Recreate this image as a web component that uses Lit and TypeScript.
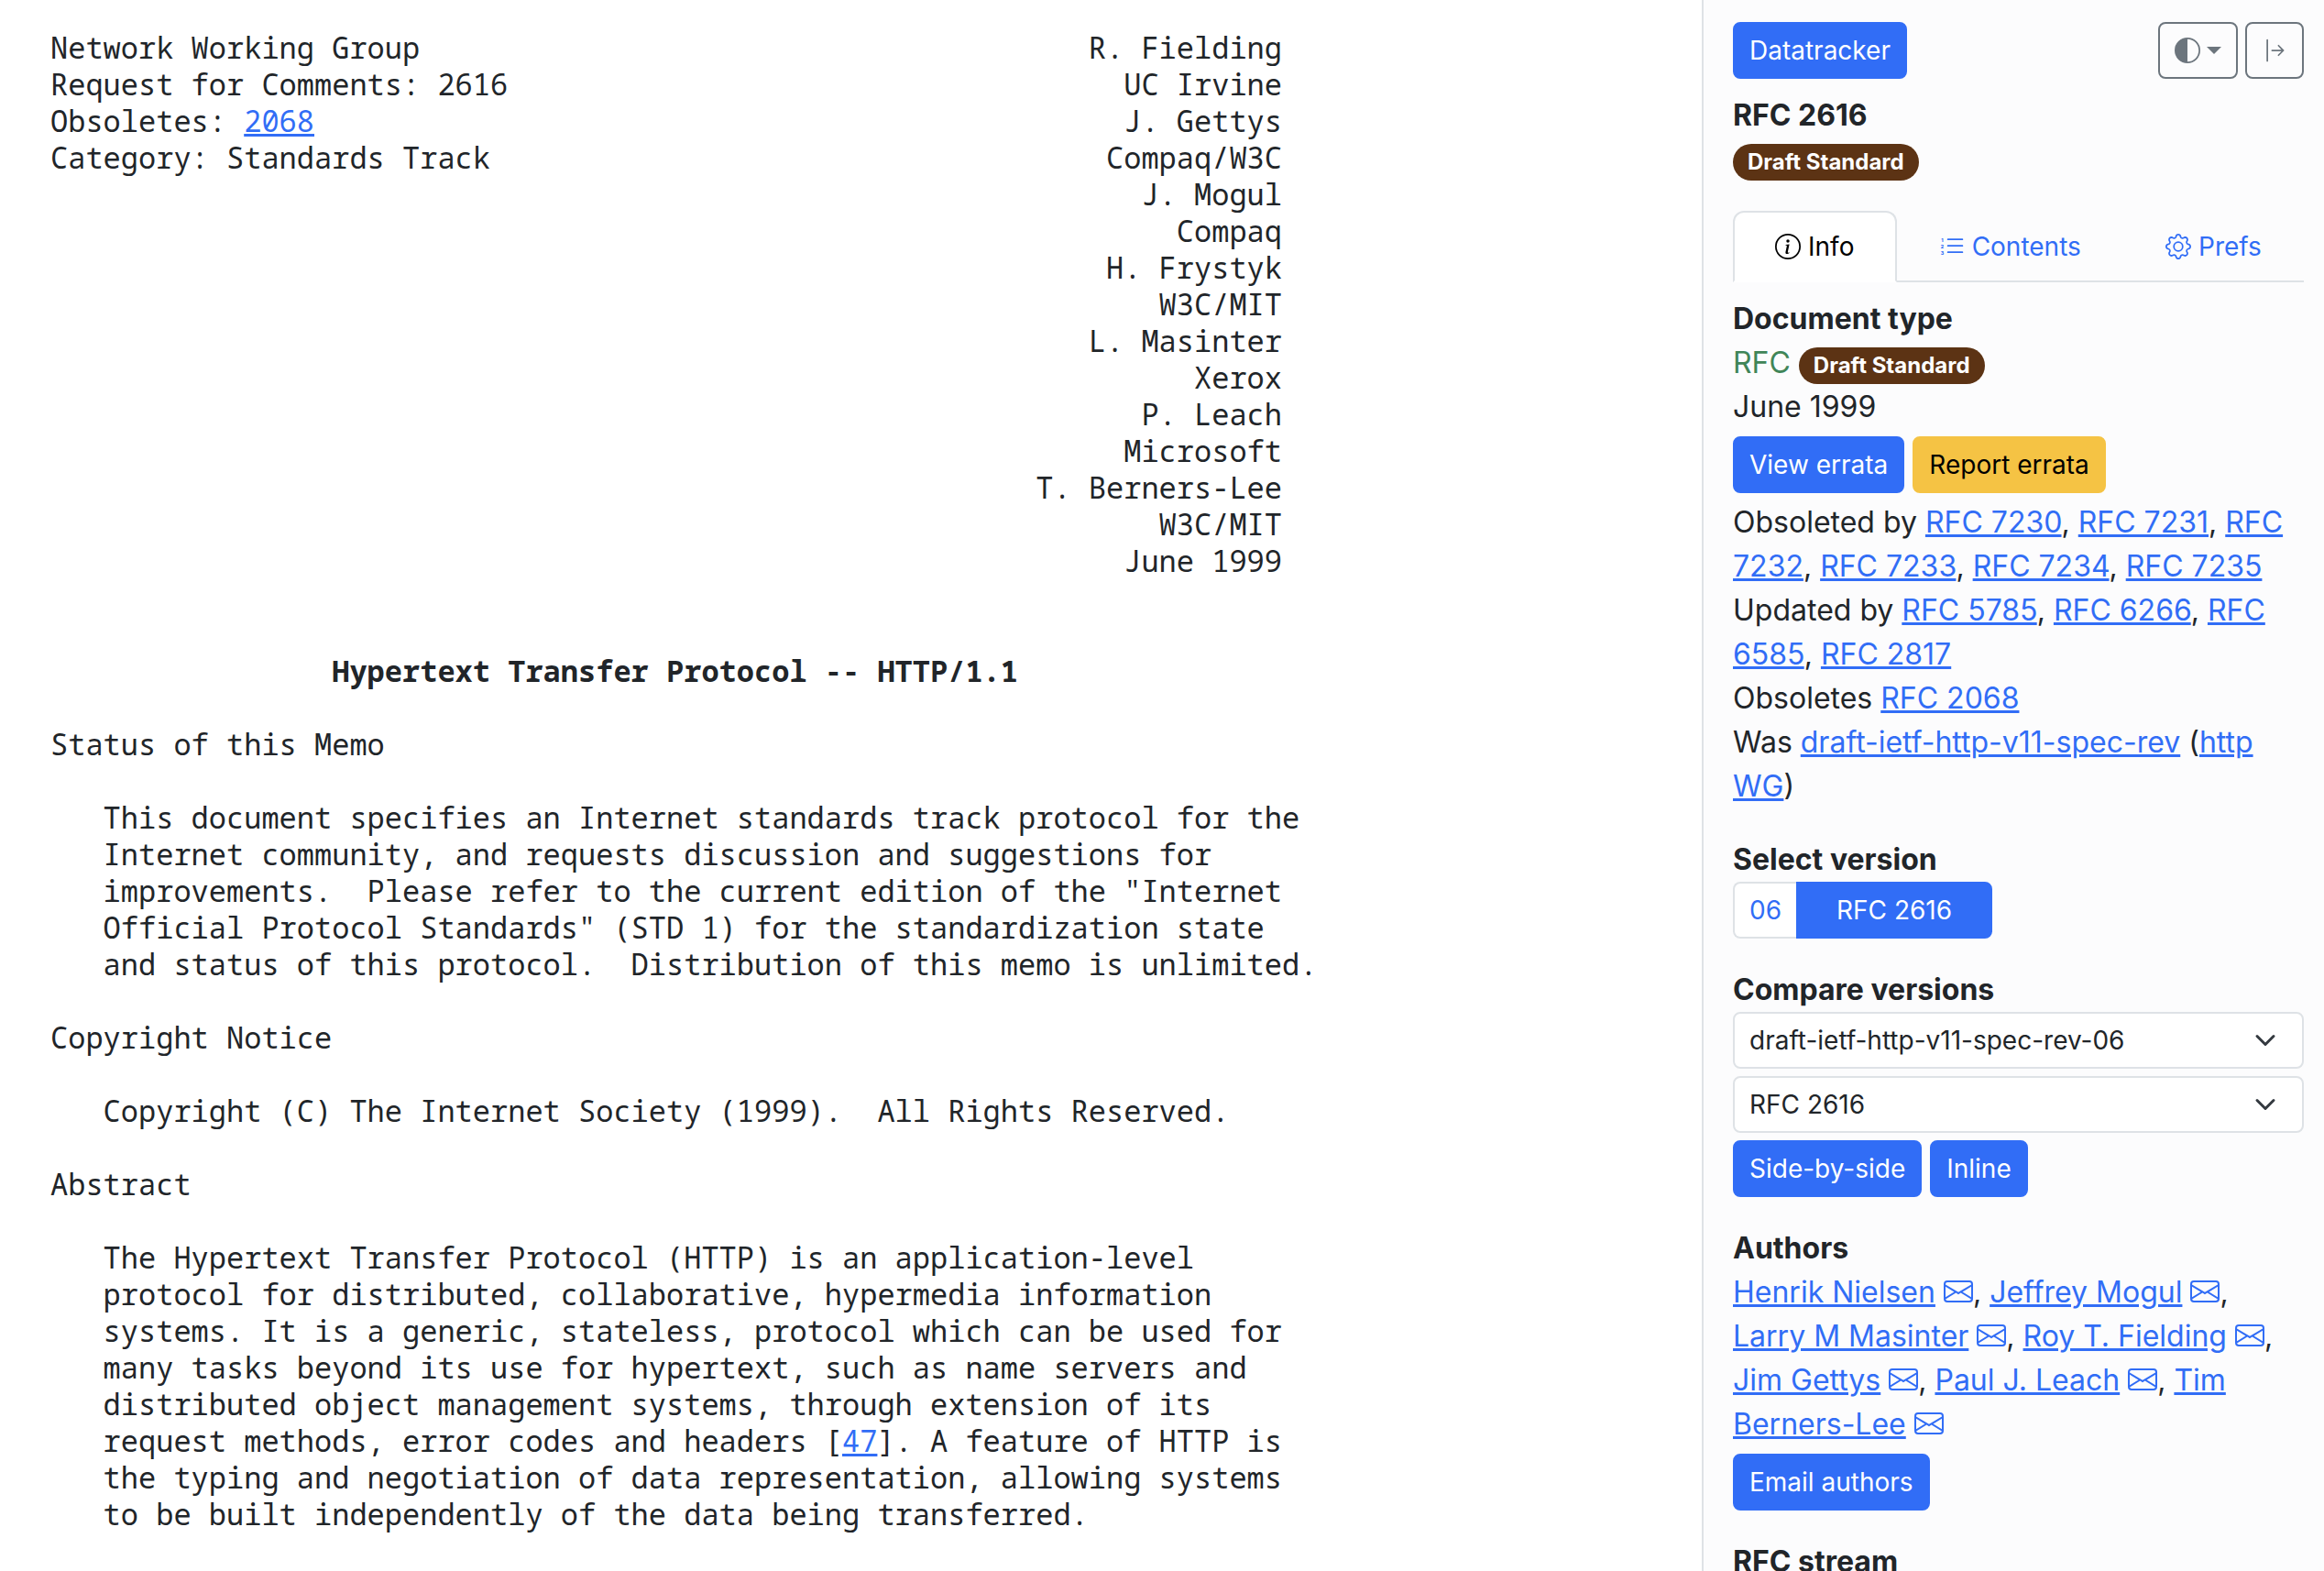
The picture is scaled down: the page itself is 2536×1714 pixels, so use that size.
import { LitElement, html, svg, css, nothing } from "lit";
import { customElement } from "lit/decorators.js";

const icons = {
  half: svg`<path d="M8 15A7 7 0 1 0 8 1zm0 1A8 8 0 1 1 8 0a8 8 0 0 1 0 16"/>`,
  collapse: svg`<path d="M6 8a.5.5 0 0 0 .5.5h5.793l-2.147 2.146a.5.5 0 0 0 .708.708l3-3a.5.5 0 0 0 0-.708l-3-3a.5.5 0 0 0-.708.708L12.293 7.5H6.5A.5.5 0 0 0 6 8m-2.5 7a.5.5 0 0 1-.5-.5v-13a.5.5 0 0 1 1 0v13a.5.5 0 0 1-.5.5"/>`,
  info: svg`<path d="M8 15A7 7 0 1 1 8 1a7 7 0 0 1 0 14m0 1A8 8 0 1 0 8 0a8 8 0 0 0 0 16"/><path d="m8.93 6.588-2.29.287-.082.38.45.083c.294.07.352.176.288.469l-.738 3.468c-.194.897.105 1.319.808 1.319.545 0 1.178-.252 1.465-.598l.088-.416c-.2.176-.492.246-.686.246-.275 0-.375-.193-.304-.533zM9 4.5a1 1 0 1 1-2 0 1 1 0 0 1 2 0"/>`,
  list: svg`<path d="M5 11.5a.5.5 0 0 1 .5-.5h9a.5.5 0 0 1 0 1h-9a.5.5 0 0 1-.5-.5m0-4a.5.5 0 0 1 .5-.5h9a.5.5 0 0 1 0 1h-9a.5.5 0 0 1-.5-.5m0-4a.5.5 0 0 1 .5-.5h9a.5.5 0 0 1 0 1h-9a.5.5 0 0 1-.5-.5"/><g font-size="3" font-weight="800" text-anchor="middle"><text x="2" y="5">1</text><text x="2" y="9">2</text><text x="2" y="13">3</text></g>`,
  gear: svg`<path d="M8 4.754a3.246 3.246 0 1 0 0 6.492 3.246 3.246 0 0 0 0-6.492M5.754 8a2.246 2.246 0 1 1 4.492 0 2.246 2.246 0 0 1-4.492 0"/><path d="M9.796 1.343c-.527-1.79-3.065-1.79-3.592 0l-.094.319a.873.873 0 0 1-1.255.52l-.292-.16c-1.64-.892-3.433.902-2.54 2.541l.159.292a.873.873 0 0 1-.52 1.255l-.319.094c-1.79.527-1.79 3.065 0 3.592l.319.094a.873.873 0 0 1 .52 1.255l-.16.292c-.892 1.64.901 3.434 2.541 2.54l.292-.159a.873.873 0 0 1 1.255.52l.094.319c.527 1.79 3.065 1.79 3.592 0l.094-.319a.873.873 0 0 1 1.255-.52l.292.16c1.64.893 3.434-.902 2.54-2.541l-.159-.292a.873.873 0 0 1 .52-1.255l.319-.094c1.79-.527 1.79-3.065 0-3.592l-.319-.094a.873.873 0 0 1-.52-1.255l.16-.292c.893-1.64-.902-3.433-2.541-2.54l-.292.159a.873.873 0 0 1-1.255-.52zm-2.633.283c.246-.835 1.428-.835 1.674 0l.094.319a1.873 1.873 0 0 0 2.693 1.115l.291-.16c.764-.415 1.6.42 1.184 1.185l-.159.292a1.873 1.873 0 0 0 1.116 2.692l.318.094c.835.246.835 1.428 0 1.674l-.319.094a1.873 1.873 0 0 0-1.115 2.693l.16.291c.415.764-.42 1.6-1.185 1.184l-.291-.159a1.873 1.873 0 0 0-2.693 1.116l-.094.318c-.246.835-1.428.835-1.674 0l-.094-.319a1.873 1.873 0 0 0-2.692-1.115l-.292.16c-.764.415-1.6-.42-1.184-1.185l.159-.291A1.873 1.873 0 0 0 1.945 8.93l-.319-.094c-.835-.246-.835-1.428 0-1.674l.319-.094A1.873 1.873 0 0 0 3.06 4.377l-.16-.292c-.415-.764.42-1.6 1.185-1.184l.292.159a1.873 1.873 0 0 0 2.692-1.115z"/>`,
  envelope: svg`<path d="M0 4a2 2 0 0 1 2-2h12a2 2 0 0 1 2 2v8a2 2 0 0 1-2 2H2a2 2 0 0 1-2-2zm2-1a1 1 0 0 0-1 1v.217l7 4.2 7-4.2V4a1 1 0 0 0-1-1zm13 2.383-4.708 2.825L15 11.105zm-.034 6.876-5.64-3.471L8 9.583l-1.326-.795-5.64 3.47A1 1 0 0 0 2 13h12a1 1 0 0 0 .966-.741M1 11.105l4.708-2.897L1 5.383z"/>`,
};

const icon = (name: keyof typeof icons) =>
  html`<svg class="icon" viewBox="0 0 16 16" aria-hidden="true">${icons[name]}</svg>`;

const link = (text: string) => html`<a class="link" href="#">${text}</a>`;

const linkList = (items: string[]) =>
  items.map((text, i) => html`${i ? ", " : nothing}${link(text)}`);

/* The memo header is a plain-text page: left column flush, right column ending at column 70. */
const COLUMNS = 70;
const headLeft = ["Network Working Group", "Request for Comments: 2616", "Obsoletes: 2068", "Category: Standards Track"];
const headRight = [
  "R. Fielding", "UC Irvine", "J. Gettys", "Compaq/W3C", "J. Mogul", "Compaq", "H. Frystyk", "W3C/MIT",
  "L. Masinter", "Xerox", "P. Leach", "Microsoft", "T. Berners-Lee", "W3C/MIT", "June 1999",
];

const header = () =>
  headRight.map((right, i) => {
    const left = headLeft[i] ?? "";
    const gap = right.padStart(COLUMNS - left.length);
    return left.startsWith("Obsoletes: ")
      ? html`Obsoletes: ${link(left.slice(11))}${gap}${"\n"}`
      : html`${left}${gap}${"\n"}`;
  });

const beforeCitation = `

Status of this Memo

   This document specifies an Internet standards track protocol for the
   Internet community, and requests discussion and suggestions for
   improvements.  Please refer to the current edition of the "Internet
   Official Protocol Standards" (STD 1) for the standardization state
   and status of this protocol.  Distribution of this memo is unlimited.

Copyright Notice

   Copyright (C) The Internet Society (1999).  All Rights Reserved.

Abstract

   The Hypertext Transfer Protocol (HTTP) is an application-level
   protocol for distributed, collaborative, hypermedia information
   systems. It is a generic, stateless, protocol which can be used for
   many tasks beyond its use for hypertext, such as name servers and
   distributed object management systems, through extension of its
   request methods, error codes and headers [`;

const afterCitation = `]. A feature of HTTP is
   the typing and negotiation of data representation, allowing systems
   to be built independently of the data being transferred.
`;

const authors = ["Henrik Nielsen", "Jeffrey Mogul", "Larry M Masinter", "Roy T. Fielding", "Jim Gettys", "Paul J. Leach", "Tim Berners-Lee"];

@customElement("rfc-text")
export class RfcText extends LitElement {
  static styles = css`
    :host { display: block; color: #212529; }
    .memo {
      margin: 0;
      padding: 32px 24px 40px 55px;
      font: 32px/40px "Noto Sans Mono", "DejaVu Sans Mono", monospace;
    }
    .title { font-weight: 700; }
    .link { color: #316df6; }
  `;

  render() {
    return html`<pre class="memo">${header()}${"\n\n" + " ".repeat(16)}<span class="title">Hypertext Transfer Protocol -- HTTP/1.1</span>${beforeCitation}${link("47")}${afterCitation}</pre>`;
  }
}

@customElement("doc-sidebar")
export class DocSidebar extends LitElement {
  static styles = css`
    *, *::before, *::after { box-sizing: border-box; }
    :host {
      display: block;
      box-sizing: border-box;
      padding: 24px 22px 0 32px;
      border-left: 2px solid #dee2e6;
      background: #fcfcfd;
      color: #212529;
      font: 32px/48px Inter, "Liberation Sans", sans-serif;
    }
    .icon { width: 1em; height: 1em; fill: currentColor; vertical-align: -0.125em; }
    .link { color: #316df6; }
    .row { display: flex; gap: 9px; }
    .top { justify-content: space-between; }
    .tools { gap: 8px; }
    .btn {
      padding: 8px 16px;
      border: 2px solid #316df6;
      border-radius: 8px;
      background: #316df6;
      color: #fff;
      font: inherit;
      font-size: 28px;
      line-height: 42px;
      text-decoration: none;
      white-space: nowrap;
    }
    .warning { border-color: #f5c344; background: #f5c344; color: #000; }
    .outline { border-color: #6c757d; background: transparent; color: #6c757d; }
    .menu { display: flex; align-items: center; gap: 7px; }
    .caret { border: 8px solid transparent; border-top-color: currentColor; border-bottom: 0; }
    .name { margin: 16px 0 0; font-size: 32px; line-height: 48px; }
    .badge {
      display: inline-block;
      padding: 8px 16px;
      border-radius: 20px;
      background: #5c3314;
      color: #fff;
      font-size: 24px;
      font-weight: 700;
      line-height: 24px;
      vertical-align: baseline;
    }
    .line { height: 48px; white-space: nowrap; }
    .std { color: #408558; }
    .tabs { display: flex; margin: 32px 0 16px; border-bottom: 2px solid #dee2e6; }
    .tab {
      flex: 1 1 auto;
      margin: 0 0 -2px;
      padding: 16px 32px;
      border: 2px solid transparent;
      border-radius: 12px 12px 0 0;
      background: none;
      color: #316df6;
      font: inherit;
      font-size: 28px;
      line-height: 42px;
      white-space: nowrap;
    }
    .active { border-color: #dee2e6 #dee2e6 #fff; background: #fff; color: #000; }
    .section { margin: 0 0 32px; }
    .heading { margin: 0; font-size: 32px; line-height: 48px; }
    .para { margin: 0; }
    .actions { margin: 8px 0; }
    .actions:last-child { margin-bottom: 0; }
    .versions { display: flex; margin: 0; padding: 0; list-style: none; }
    .version {
      display: block;
      padding: 8px 16px;
      border: 2px solid #dee2e6;
      border-right: 0;
      border-radius: 8px 0 0 8px;
      background: #fff;
      color: #316df6;
      font-size: 28px;
      line-height: 42px;
      text-decoration: none;
    }
    .current { padding: 8px 42px; border: 2px solid #316df6; border-radius: 0 8px 8px 0; background: #316df6; color: #fff; }
    .compare { display: grid; gap: 8px; }
    .picker { display: grid; align-items: center; }
    .select, .chevron { grid-area: 1 / 1; }
    .select {
      appearance: none;
      width: 100%;
      height: 62px;
      padding: 8px 72px 8px 16px;
      border: 2px solid #dee2e6;
      border-radius: 8px;
      background: #fff;
      color: #212529;
      font: inherit;
      font-size: 28px;
      line-height: 42px;
    }
    .chevron {
      justify-self: end;
      width: 24px;
      height: 24px;
      margin-right: 30px;
      fill: none;
      stroke: #343a40;
      stroke-width: 2;
      stroke-linecap: round;
      stroke-linejoin: round;
      pointer-events: none;
    }
  `;

  private picker(label: string, selected: string) {
    const options = ["draft-ietf-http-v11-spec-rev-06", "RFC 2616"];
    return html`<div class="picker">
      <select class="select" aria-label=${label}>
        ${options.map((o) => html`<option ?selected=${o === selected}>${o}</option>`)}
      </select>
      <svg class="chevron" viewBox="0 0 16 16" aria-hidden="true"><path d="m2 5 6 6 6-6"/></svg>
    </div>`;
  }

  render() {
    return html`
      <div class="row top">
        <a class="btn" href="#">Datatracker</a>
        <div class="row tools">
          <button class="btn outline menu" aria-label="Colour scheme">${icon("half")}<span class="caret"></span></button>
          <button class="btn outline" aria-label="Hide sidebar">${icon("collapse")}</button>
        </div>
      </div>
      <h1 class="name">RFC 2616</h1>
      <div class="line"><span class="badge">Draft Standard</span></div>

      <div class="tabs" role="tablist">
        <button class="tab active" role="tab" aria-selected="true">${icon("info")} Info</button>
        <button class="tab" role="tab" aria-selected="false">${icon("list")} Contents</button>
        <button class="tab" role="tab" aria-selected="false">${icon("gear")} Prefs</button>
      </div>

      <section class="section">
        <h2 class="heading">Document type</h2>
        <div class="line"><span class="std">RFC</span> <span class="badge">Draft Standard</span></div>
        <p class="para">June 1999</p>
        <div class="row actions">
          <a class="btn" href="#">View errata</a>
          <a class="btn warning" href="#">Report errata</a>
        </div>
        <p class="para">Obsoleted by ${linkList(["RFC 7230", "RFC 7231", "RFC 7232", "RFC 7233", "RFC 7234", "RFC 7235"])}</p>
        <p class="para">Updated by ${linkList(["RFC 5785", "RFC 6266", "RFC 6585", "RFC 2817"])}</p>
        <p class="para">Obsoletes ${link("RFC 2068")}</p>
        <p class="para">Was ${link("draft-ietf-http-v11-spec-rev")} (${link("http WG")})</p>
      </section>

      <section class="section">
        <h2 class="heading">Select version</h2>
        <ul class="versions">
          <li><a class="version" href="#">06</a></li>
          <li><a class="version current" href="#" aria-current="page">RFC 2616</a></li>
        </ul>
      </section>

      <section class="section">
        <h2 class="heading">Compare versions</h2>
        <div class="compare">
          ${this.picker("From version", "draft-ietf-http-v11-spec-rev-06")}
          ${this.picker("To version", "RFC 2616")}
        </div>
        <div class="row actions">
          <button class="btn">Side-by-side</button>
          <button class="btn">Inline</button>
        </div>
      </section>

      <section class="section">
        <h2 class="heading">Authors</h2>
        <p class="para">${authors.map(
          (name, i) => html`${i ? ", " : nothing}${link(name)} <a class="link" href="#" aria-label="Email ${name}">${icon("envelope")}</a>`
        )}</p>
        <div class="row actions"><a class="btn" href="#">Email authors</a></div>
      </section>

      <section class="section">
        <h2 class="heading">RFC stream</h2>
      </section>
    `;
  }
}

@customElement("app-root")
export class AppRoot extends LitElement {
  static styles = css`
    :host { display: block; background: #fff; }
    .page { display: grid; grid-template-columns: minmax(0, 1fr) minmax(0, 679px); height: 100vh; }
    .text { overflow: hidden; }
    .side { overflow: hidden; }
  `;

  render() {
    return html`<div class="page">
      <rfc-text class="text" role="main"></rfc-text>
      <doc-sidebar class="side" role="complementary"></doc-sidebar>
    </div>`;
  }
}
